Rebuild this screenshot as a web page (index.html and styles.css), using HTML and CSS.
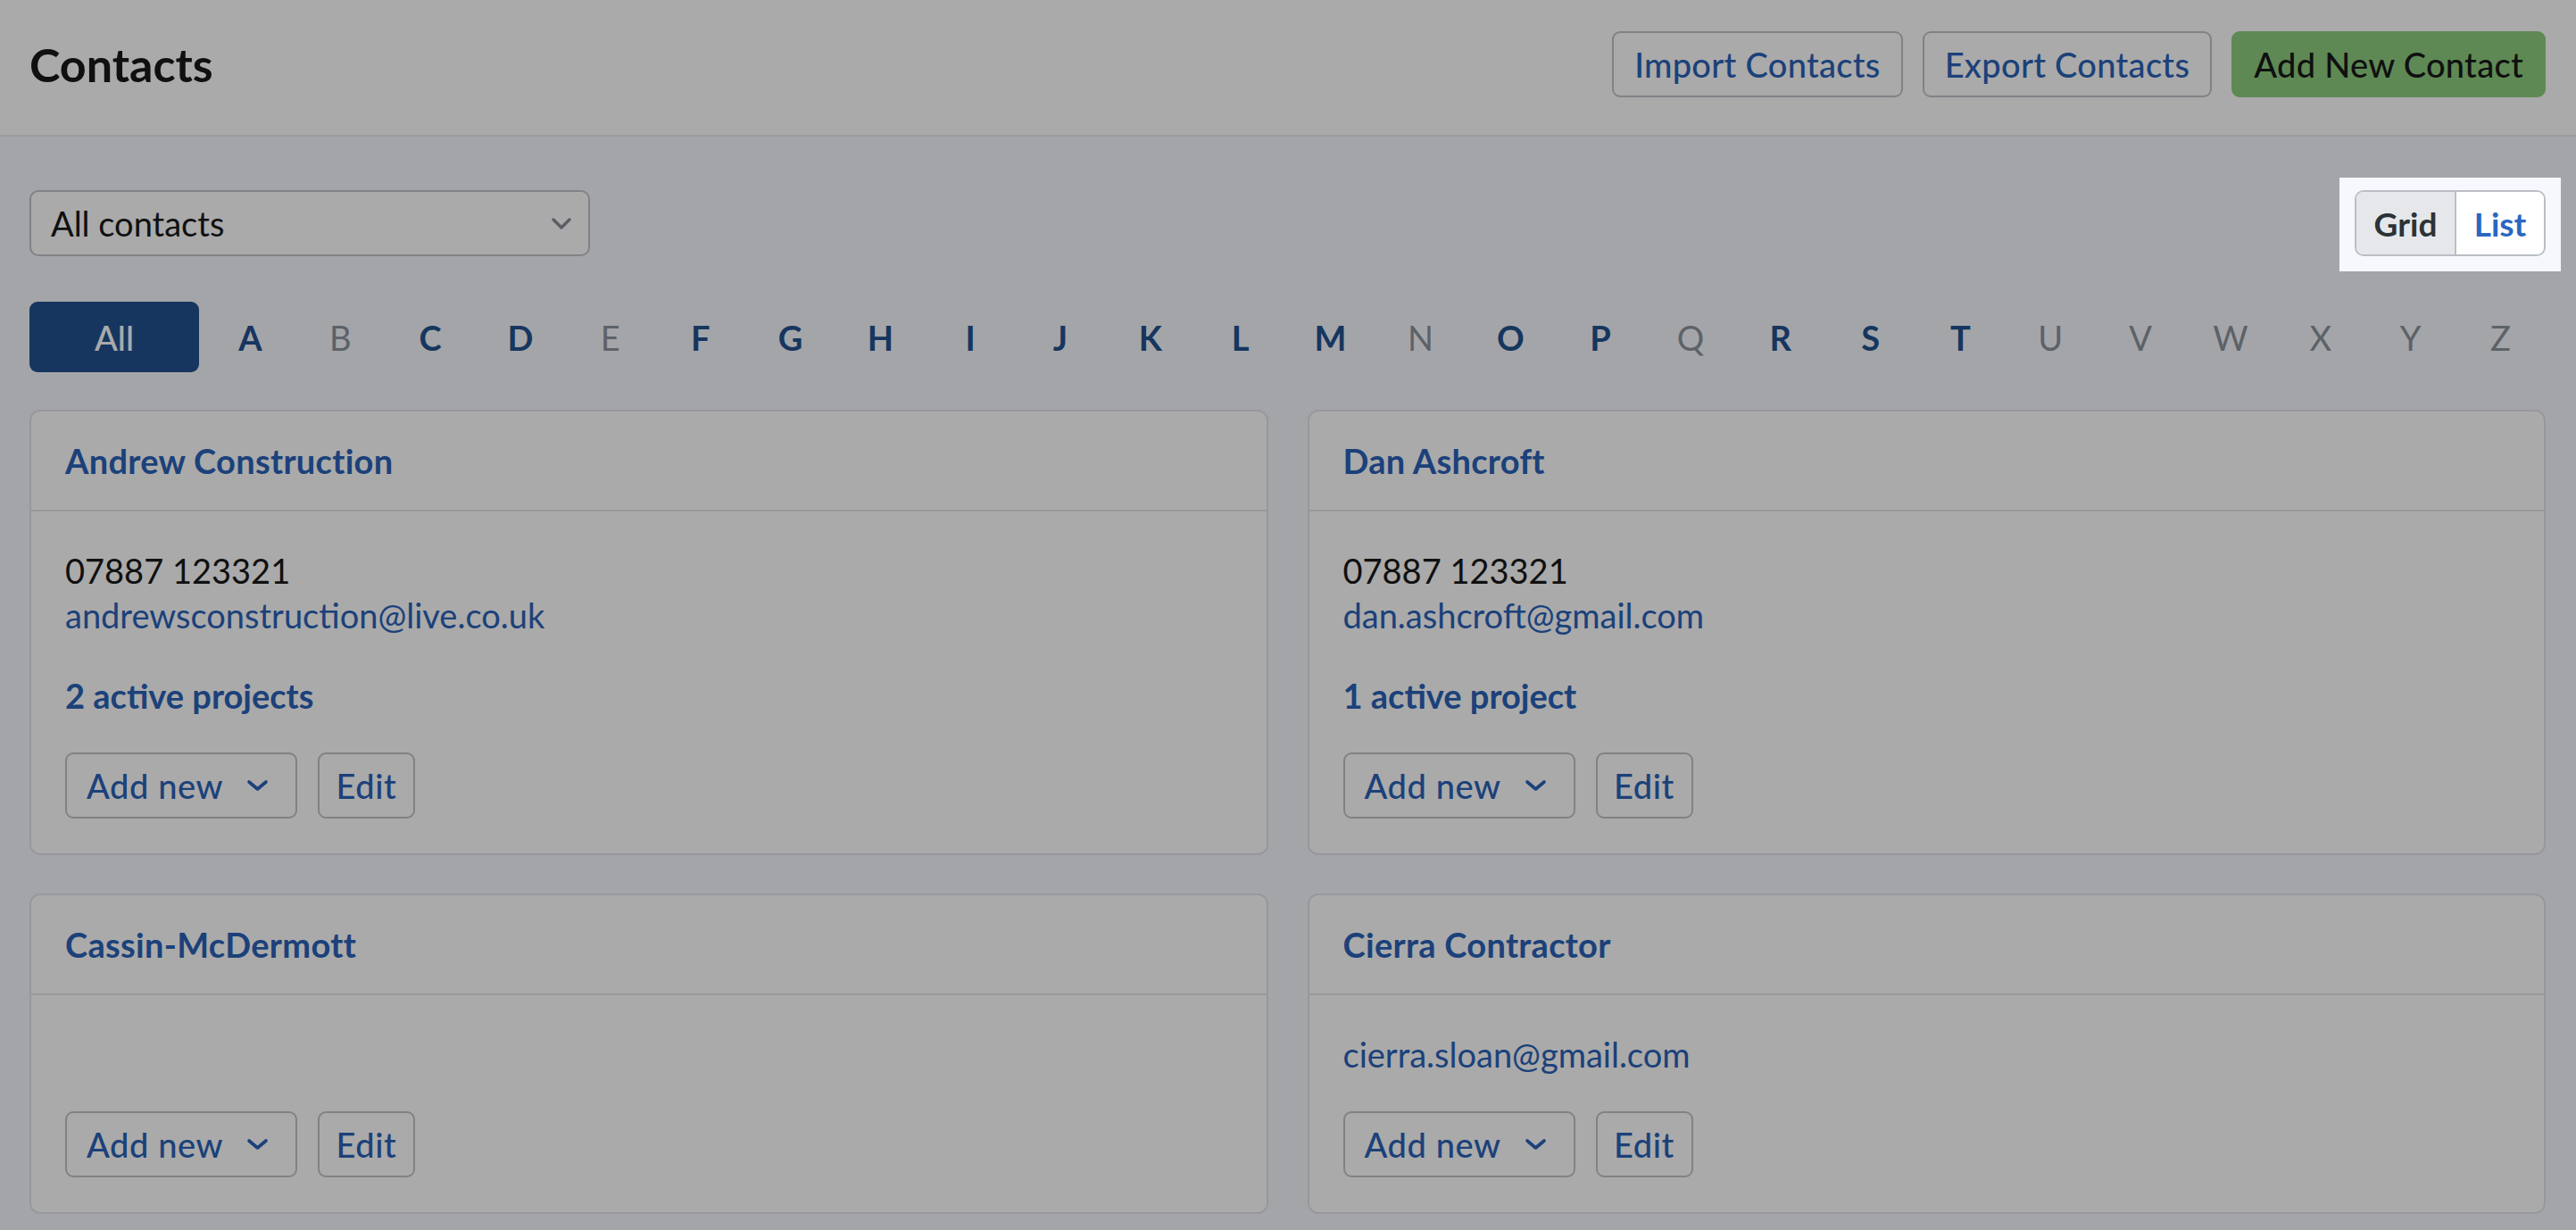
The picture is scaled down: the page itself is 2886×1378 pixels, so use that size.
FILE: index.html
```html
<!DOCTYPE html>
<html lang="en">

<head>
    <meta charset="UTF-8">
    <meta name="viewport" content="width=device-width, initial-scale=1.0">
    <title>Contacts</title>
    <link rel="stylesheet" href="styles.css">
</head>

<body>

    <!-- top bar -->
    <header class="page-header">
        <h1 class="page-title">Contacts</h1>
        <div class="header-actions">
            <button class="btn btn-outline">Import Contacts</button>
            <button class="btn btn-outline">Export Contacts</button>
            <button class="btn btn-success">Add New Contact</button>
        </div>
    </header>

    <main class="page-body">

        <!-- filter + view switch -->
        <div class="toolbar">
            <div class="select-box">
                <span>All contacts</span>
                <svg class="select-caret" viewBox="0 0 22 13" width="22" height="13">
                    <polyline points="2,2 11,11 20,2" fill="none" stroke="currentColor" stroke-width="3.4" stroke-linecap="round" stroke-linejoin="round" />
                </svg>
            </div>

            <div class="tour-spot">
                <div class="view-toggle">
                    <button class="toggle-item active">Grid</button>
                    <button class="toggle-item">List</button>
                </div>
            </div>
        </div>

        <!-- letter filter -->
        <nav class="alphabet">
            <a class="letter-all">All</a>
            <a class="letter">A</a>
            <a class="letter empty">B</a>
            <a class="letter">C</a>
            <a class="letter">D</a>
            <a class="letter empty">E</a>
            <a class="letter">F</a>
            <a class="letter">G</a>
            <a class="letter">H</a>
            <a class="letter">I</a>
            <a class="letter">J</a>
            <a class="letter">K</a>
            <a class="letter">L</a>
            <a class="letter">M</a>
            <a class="letter empty">N</a>
            <a class="letter">O</a>
            <a class="letter">P</a>
            <a class="letter empty">Q</a>
            <a class="letter">R</a>
            <a class="letter">S</a>
            <a class="letter">T</a>
            <a class="letter empty">U</a>
            <a class="letter empty">V</a>
            <a class="letter empty">W</a>
            <a class="letter empty">X</a>
            <a class="letter empty">Y</a>
            <a class="letter empty">Z</a>
        </nav>

        <!-- contact cards -->
        <section class="contact-grid">

            <div class="contact-card">
                <div class="card-head"><a class="card-name">Andrew Construction</a></div>
                <div class="card-main">
                    <div class="card-details">
                        <div class="phone">07887 123321</div>
                        <a class="email">andrewsconstruction@live.co.uk</a>
                    </div>
                    <a class="projects">2 active projects</a>
                    <div class="card-actions">
                        <button class="btn btn-outline btn-add"><span>Add new</span>
                            <svg class="caret" viewBox="0 0 25 14" width="25" height="14">
                                <polyline points="3,3 12.5,11 22,3" fill="none" stroke="currentColor" stroke-width="3.6" stroke-linecap="round" stroke-linejoin="round" />
                            </svg>
                        </button>
                        <button class="btn btn-outline btn-edit">Edit</button>
                    </div>
                </div>
            </div>

            <div class="contact-card">
                <div class="card-head"><a class="card-name">Dan Ashcroft</a></div>
                <div class="card-main">
                    <div class="card-details">
                        <div class="phone">07887 123321</div>
                        <a class="email">dan.ashcroft@gmail.com</a>
                    </div>
                    <a class="projects">1 active project</a>
                    <div class="card-actions">
                        <button class="btn btn-outline btn-add"><span>Add new</span>
                            <svg class="caret" viewBox="0 0 25 14" width="25" height="14">
                                <polyline points="3,3 12.5,11 22,3" fill="none" stroke="currentColor" stroke-width="3.6" stroke-linecap="round" stroke-linejoin="round" />
                            </svg>
                        </button>
                        <button class="btn btn-outline btn-edit">Edit</button>
                    </div>
                </div>
            </div>

            <div class="contact-card">
                <div class="card-head"><a class="card-name">Cassin-McDermott</a></div>
                <div class="card-main">
                    <div class="card-details"></div>
                    <div class="card-actions">
                        <button class="btn btn-outline btn-add"><span>Add new</span>
                            <svg class="caret" viewBox="0 0 25 14" width="25" height="14">
                                <polyline points="3,3 12.5,11 22,3" fill="none" stroke="currentColor" stroke-width="3.6" stroke-linecap="round" stroke-linejoin="round" />
                            </svg>
                        </button>
                        <button class="btn btn-outline btn-edit">Edit</button>
                    </div>
                </div>
            </div>

            <div class="contact-card">
                <div class="card-head"><a class="card-name">Cierra Contractor</a></div>
                <div class="card-main">
                    <div class="card-details">
                        <a class="email">cierra.sloan@gmail.com</a>
                    </div>
                    <div class="card-actions">
                        <button class="btn btn-outline btn-add"><span>Add new</span>
                            <svg class="caret" viewBox="0 0 25 14" width="25" height="14">
                                <polyline points="3,3 12.5,11 22,3" fill="none" stroke="currentColor" stroke-width="3.6" stroke-linecap="round" stroke-linejoin="round" />
                            </svg>
                        </button>
                        <button class="btn btn-outline btn-edit">Edit</button>
                    </div>
                </div>
            </div>

        </section>
    </main>

    <!-- onboarding tour: dims the page, the view switch stays lit -->
    <div class="tour-backdrop"></div>

</body>

</html>
```

FILE: styles.css
```css
/* base */
* {
    box-sizing: border-box;
}

body {
    margin: 0;
    background-color: #f6f8fd;
    font-family: "Lato", "Liberation Sans", sans-serif;
    color: #181818;
}

a {
    cursor: pointer;
}

/* header */
.page-header {
    height: 153px;
    display: flex;
    align-items: center;
    justify-content: space-between;
    padding: 0 34px 8px 33px;
    background-color: #fff;
    border-bottom: 2px solid #e8eaf0;
}

.page-title {
    margin: 0;
    font-size: 52px;
    font-weight: 700;
    color: #181818;
}

.header-actions {
    display: flex;
    gap: 22px;
}

/* buttons */
.btn {
    height: 74px;
    display: inline-flex;
    align-items: center;
    padding: 0 23px;
    border-radius: 9px;
    font-family: inherit;
    font-size: 38px;
    font-weight: 500;
    letter-spacing: 0.3px;
    white-space: nowrap;
    cursor: pointer;
}

.btn-outline {
    background-color: #fff;
    border: 2px solid #c1c4ca;
    color: #2a62b8;
}

.btn-success {
    background-color: #8dce7e;
    border: 2px solid #8dce7e;
    color: #181818;
}

.btn-add {
    width: 260px;
    justify-content: space-between;
    padding: 0 30px 0 22px;
    letter-spacing: 0.6px;
}

.btn-edit {
    width: 109px;
    justify-content: center;
    padding: 0;
    letter-spacing: 0.6px;
}

.caret {
    display: block;
}

/* main area */
.page-body {
    padding: 60px 34px 0 33px;
}

.toolbar {
    display: flex;
    align-items: center;
    justify-content: space-between;
}

.select-box {
    width: 628px;
    height: 74px;
    display: flex;
    align-items: center;
    justify-content: space-between;
    padding: 0 19px 0 22px;
    background-color: #fff;
    border: 2px solid #c1c4ca;
    border-radius: 10px;
    font-size: 38px;
    color: #181818;
}

.select-caret {
    color: #878e96;
}

/* the spot the tour lights up */
.tour-spot {
    position: relative;
    z-index: 20;
    margin: -14px -17px -17px 0;
    padding: 14px 17px 17px;
    background-color: #f6f8fd;
}

.view-toggle {
    display: flex;
    height: 74px;
    border: 2px solid #babec4;
    border-radius: 10px;
    overflow: hidden;
}

.toggle-item {
    border: 0;
    background-color: #fff;
    font-family: inherit;
    font-size: 37px;
    font-weight: 700;
    color: #2b67c1;
    padding: 0;
    width: 98px;
    cursor: pointer;
}

.toggle-item.active {
    width: 112px;
    background-color: #e5e7eb;
    color: #2b3337;
    border-right: 2px solid #babec4;
}

/* letters */
.alphabet {
    display: flex;
    align-items: center;
    margin-top: 51px;
}

.letter-all {
    width: 190px;
    height: 79px;
    margin-right: 7px;
    display: flex;
    align-items: center;
    justify-content: center;
    background-color: #22518f;
    border-radius: 9px;
    color: #fff;
    font-size: 38px;
    font-weight: 500;
}

.letter {
    flex: 1;
    text-align: center;
    font-size: 38px;
    font-weight: 700;
    color: #22518f;
}

.letter.empty {
    font-weight: 400;
    color: #8a939b;
}

/* cards */
.contact-grid {
    display: grid;
    grid-template-columns: 1fr 1fr;
    gap: 43px 44px;
    margin-top: 42px;
}

.contact-card {
    background-color: #fff;
    border: 2px solid #e3e5ea;
    border-radius: 12px;
}

.card-head {
    height: 112px;
    display: flex;
    align-items: center;
    padding: 0 38px;
    border-bottom: 2px solid #e3e5ea;
}

.card-name {
    font-size: 38px;
    font-weight: 700;
    letter-spacing: 0.3px;
    color: #2a62b8;
}

.card-main {
    padding: 41px 38px 39px;
}

.card-details {
    min-height: 50px;
    font-size: 38px;
    line-height: 50px;
}

.phone {
    color: #181818;
}

.email {
    display: block;
    color: #2a62b8;
}

.projects {
    display: block;
    margin-top: 40px;
    font-size: 38px;
    line-height: 50px;
    font-weight: 700;
    color: #2a62b8;
}

.card-actions {
    display: flex;
    gap: 23px;
    margin-top: 39px;
}

/* tour overlay */
.tour-backdrop {
    position: fixed;
    inset: 0;
    z-index: 10;
    background-color: rgba(0, 0, 0, 0.333);
}
```
